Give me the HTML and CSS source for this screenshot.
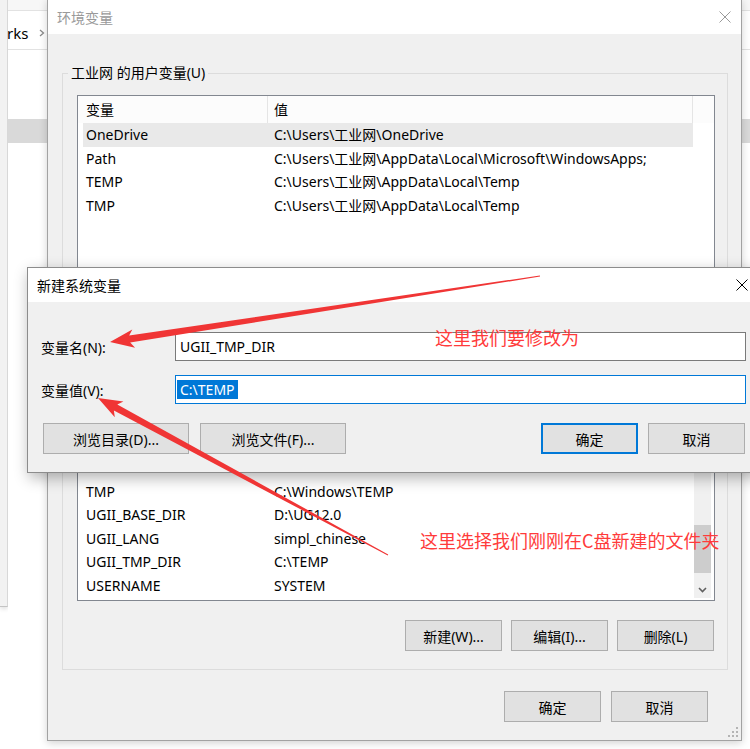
FILE: index.html
```html
<!DOCTYPE html>
<html lang="zh-CN">
<head>
    <meta charset="UTF-8">
    <title>环境变量</title>
    <link rel="stylesheet" href="styles.css">
</head>
<body>
<div class="desk">
    <div class="side"></div>
    <div class="explorer">
        <div class="nav-top"></div>
        <div class="nav">
            <span class="crumb">rks</span>
            <svg class="chev" width="6" height="8" viewBox="0 0 6 8"><polyline points="1,1 4.5,4 1,7" fill="none" stroke="#8a8a8a" stroke-width="1.3"/></svg>
        </div>
        <div class="tree-sel"></div>
    </div>

    <!-- 环境变量 -->
    <div class="win env">
        <div class="titlebar">
            <span class="title inactive">环境变量</span>
            <svg class="close" width="12" height="12" viewBox="0 0 12 12"><path d="M0.5 0.5L11.5 11.5M11.5 0.5L0.5 11.5" stroke="#9a9a9a" stroke-width="1"/></svg>
        </div>
        <div class="env-body">
            <div class="group">
                <span class="group-label">工业网 的用户变量(U)</span>
                <div class="list list-user">
                    <div class="list-head">
                        <div class="h1">变量</div>
                        <div class="h2">值</div>
                    </div>
                    <div class="row sel"><span class="c1">OneDrive</span><span class="c2">C:\Users\工业网\OneDrive</span></div>
                    <div class="row"><span class="c1">Path</span><span class="c2">C:\Users\工业网\AppData\Local\Microsoft\WindowsApps;</span></div>
                    <div class="row"><span class="c1">TEMP</span><span class="c2">C:\Users\工业网\AppData\Local\Temp</span></div>
                    <div class="row"><span class="c1">TMP</span><span class="c2">C:\Users\工业网\AppData\Local\Temp</span></div>
                </div>
                <div class="btn-row">
                    <div class="btn">新建(N)...</div>
                    <div class="btn">编辑(E)...</div>
                    <div class="btn">删除(D)</div>
                </div>
            </div>

            <div class="group sys">
                <span class="group-label">系统变量(S)</span>
                <div class="list list-sys">
                    <div class="rows">
                        <div class="row"><span class="c1">OS</span><span class="c2">Windows_NT</span></div>
                        <div class="row"><span class="c1">Path</span><span class="c2">C:\Windows\system32;C:\Windows;</span></div>
                        <div class="row"><span class="c1">PATHEXT</span><span class="c2">.COM;.EXE;.BAT;.CMD;.VBS;.VBE;.JS;</span></div>
                        <div class="row"><span class="c1">PROCESSOR_ARCHITECTURE</span><span class="c2">AMD64</span></div>
                        <div class="row"><span class="c1">PROCESSOR_LEVEL</span><span class="c2">6</span></div>
                        <div class="row"><span class="c1">PSModulePath</span><span class="c2">%ProgramFiles%\WindowsPowerShell\Modules</span></div>
                        <div class="row"><span class="c1">TEMP</span><span class="c2">C:\Windows\TEMP</span></div>
                        <div class="row"><span class="c1">TMP</span><span class="c2">C:\Windows\TEMP</span></div>
                        <div class="row"><span class="c1">UGII_BASE_DIR</span><span class="c2">D:\UG12.0</span></div>
                        <div class="row"><span class="c1">UGII_LANG</span><span class="c2">simpl_chinese</span></div>
                        <div class="row"><span class="c1">UGII_TMP_DIR</span><span class="c2">C:\TEMP</span></div>
                        <div class="row"><span class="c1">USERNAME</span><span class="c2">SYSTEM</span></div>
                    </div>
                    <div class="scrollbar">
                        <div class="thumb"></div>
                        <div class="arrow-down">
                            <svg width="9" height="6" viewBox="0 0 9 6"><polyline points="1,1 4.5,4.5 8,1" fill="none" stroke="#606060" stroke-width="1.6"/></svg>
                        </div>
                    </div>
                </div>
                <div class="btn-row">
                    <div class="btn">新建(W)...</div>
                    <div class="btn">编辑(I)...</div>
                    <div class="btn">删除(L)</div>
                </div>
            </div>

            <div class="btn-row dialog-btns">
                <div class="btn">确定</div>
                <div class="btn">取消</div>
            </div>
        </div>
        <svg class="grip" width="12" height="12" viewBox="0 0 12 12" fill="#b4b4b4">
            <rect x="9" y="1" width="2" height="2"/>
            <rect x="5" y="5" width="2" height="2"/><rect x="9" y="5" width="2" height="2"/>
            <rect x="1" y="9" width="2" height="2"/><rect x="5" y="9" width="2" height="2"/><rect x="9" y="9" width="2" height="2"/>
        </svg>
    </div>

    <!-- 新建系统变量 -->
    <div class="win newvar">
        <div class="titlebar">
            <span class="title">新建系统变量</span>
            <svg class="close" width="12" height="12" viewBox="0 0 12 12"><path d="M0.5 0.5L11.5 11.5M11.5 0.5L0.5 11.5" stroke="#000" stroke-width="1"/></svg>
        </div>
        <div class="newvar-body">
            <div class="field">
                <label>变量名(N):</label>
                <div class="input">UGII_TMP_DIR</div>
            </div>
            <div class="field second">
                <label>变量值(V):</label>
                <div class="input focus"><span class="picked">C:\TEMP</span></div>
            </div>
            <div class="btn-row newvar-btns">
                <div class="btn wide">浏览目录(D)...</div>
                <div class="btn wide">浏览文件(F)...</div>
                <div class="btn default">确定</div>
                <div class="btn">取消</div>
            </div>
        </div>
    </div>

    <!-- 标注 -->
    <div class="note note1">这里我们要修改为</div>
    <div class="note note2">这里选择我们刚刚在C盘新建的文件夹</div>
    <svg class="arrows" width="750" height="749" viewBox="0 0 750 749">
        <polygon points="110,342 135.1,347.8 130.2,342.5 540.1,276.5 539.9,275.5 129.2,335.5 132.3,329.5" fill="#f03535"/>
        <polygon points="98,398 123.4,401.5 117.3,404.4 388.2,554.6 387.8,555.4 113.9,410.6 114.8,417.3" fill="#f03535"/>
    </svg>
</div>
</body>
</html>
```

FILE: styles.css
```css
body {
    margin: 0;
    background: #fff;
    font-family: "Noto Sans", "Noto Sans CJK SC", sans-serif;
    font-size: 14px;
    color: #000;
}
.desk {
    position: relative;
    width: 750px;
    height: 749px;
    overflow: hidden;
}

/* windows behind */
.side {
    position: absolute;
    left: 0;
    top: 0;
    width: 7px;
    height: 606px;
    background: #f2f2f2;
    border-right: 1px solid #d8d8d8;
    border-bottom: 1px solid #c4c4c4;
    box-shadow: 0 2px 4px rgba(0,0,0,0.12);
}
.explorer {
    position: absolute;
    left: 8px;
    top: 0;
    right: 0;
    height: 749px;
    background: #fff;
}
.nav-top {
    height: 10px;
    background: #f7f7f7;
    border-bottom: 1px solid #e2e2e2;
}
.nav {
    box-sizing: border-box;
    height: 39px;
    padding-top: 5px;
    display: flex;
    align-items: center;
    border-bottom: 1px solid #e2e2e2;
}
.crumb { font-size: 15px; margin-left: -1px; }
.chev { margin-left: 11px; }
.tree-sel {
    margin-top: 69px;
    height: 24px;
    background: #d9d9d9;
}

/* window frame */
.win {
    position: absolute;
    box-sizing: border-box;
    display: flex;
    flex-direction: column;
}
.titlebar {
    height: 34px;
    flex-shrink: 0;
    background: #fff;
    display: flex;
    align-items: center;
    padding-left: 9px;
}
.title { margin-top: -1px; }
.title.inactive { color: #9a9a9a; }
.close { margin-left: auto; }

.env {
    left: 47px;
    top: -1px;
    width: 695px;
    height: 742px;
    border: 1px solid #a2a2a2;
    box-shadow: 0 2px 8px rgba(0,0,0,0.18);
}
.env .close { margin-right: 10px; }
.env-body {
    flex: 1;
    background: #f0f0f0;
    padding: 39px 13px 18px 14px;
}
.grip {
    position: absolute;
    right: 2px;
    bottom: 2px;
}

.group {
    position: relative;
    border: 1px solid #dcdcdc;
    padding: 21px 12px 10px 14px;
}
.group.sys {
    margin-top: 12px;
    padding-bottom: 18px;
}
.group-label {
    position: absolute;
    left: 5px;
    top: -11px;
    padding: 0 3px;
    line-height: 20px;
    background: #f0f0f0;
}

/* list views */
.list {
    box-sizing: border-box;
    border: 1px solid #828790;
    background: #fff;
    overflow: hidden;
}
.list-user { height: 206px; }
.list-head {
    display: flex;
    height: 27px;
    line-height: 27px;
    background: #fcfcfc;
}
.h1, .h2 {
    box-sizing: border-box;
    border-right: 1px solid #e5e5e5;
}
.h1 { width: 190px; padding-left: 8px; }
.h2 { width: 425px; padding-left: 6px; }
.row {
    display: flex;
    flex-shrink: 0;
    height: 23.5px;
    line-height: 23.5px;
    margin-left: 5px;
    width: 610px;
    white-space: nowrap;
}
.row.sel { background: #e9e9e9; }
.c1 {
    box-sizing: border-box;
    width: 191px;
    padding-left: 3px;
    flex-shrink: 0;
}

.list-sys {
    height: 214px;
    display: flex;
    padding: 0 3px 2px 0;
}
.rows {
    flex: 1;
    display: flex;
    flex-direction: column;
    justify-content: flex-end;
    overflow: hidden;
    padding-bottom: 1px;
}
.scrollbar {
    width: 17px;
    background: #f0f0f0;
    display: flex;
    flex-direction: column;
    justify-content: flex-end;
}
.thumb {
    height: 48px;
    margin-bottom: 8px;
    background: #cdcdcd;
}
.arrow-down {
    height: 17px;
    display: flex;
    align-items: center;
    justify-content: center;
}

/* buttons */
.btn-row {
    display: flex;
    justify-content: flex-end;
    gap: 9px;
    margin-top: 10px;
    margin-right: 1px;
}
.group.sys .btn-row { margin-top: 19px; }
.btn {
    box-sizing: border-box;
    width: 97px;
    height: 31px;
    border: 1px solid #adadad;
    background: #e1e1e1;
    display: flex;
    align-items: center;
    justify-content: center;
    white-space: nowrap;
}
.dialog-btns {
    margin-top: 21px;
    margin-right: 20px;
    gap: 10px;
}

/* new variable dialog */
.newvar {
    left: 27px;
    top: 267px;
    width: 733px;
    height: 206px;
    border: 1px solid #8c8c8c;
    box-shadow: 2px 5px 14px rgba(0,0,0,0.3);
}
.newvar .close { margin-right: 11px; }
.newvar-body {
    flex: 1;
    background: #f0f0f0;
    padding: 30px 13px 18px 13px;
}
.field {
    display: flex;
    align-items: center;
    height: 29px;
}
.field.second { margin-top: 14px; }
.field label {
    width: 134px;
    flex-shrink: 0;
}
.input {
    flex: 1;
    box-sizing: border-box;
    height: 29px;
    border: 1px solid #7a7a7a;
    background: #fff;
    padding-left: 4px;
    display: flex;
    align-items: center;
}
.input.focus {
    border-color: #0078d7;
    padding-left: 1px;
}
.picked {
    background: #0078d7;
    color: #fff;
    padding: 0 3px 0 3px;
    line-height: 19px;
}
.newvar-btns {
    margin-top: 19px;
    gap: 11px;
    margin-right: 1px;
}
.btn.wide { width: 146px; }
.newvar-btns .wide:first-child { margin-left: 2px; }
.btn.default {
    margin-left: auto;
    border: 2px solid #0078d7;
}
.newvar-btns .btn:last-child { margin-left: -1px; }

/* annotations */
.note {
    position: absolute;
    font-family: "Noto Sans CJK SC", sans-serif;
    font-size: 18px;
    line-height: 24px;
    color: #ff3b3b;
    white-space: nowrap;
}
.note1 { left: 435px; top: 325px; }
.note2 { left: 420px; top: 528px; }
.arrows {
    position: absolute;
    left: 0;
    top: 0;
    pointer-events: none;
}
```
